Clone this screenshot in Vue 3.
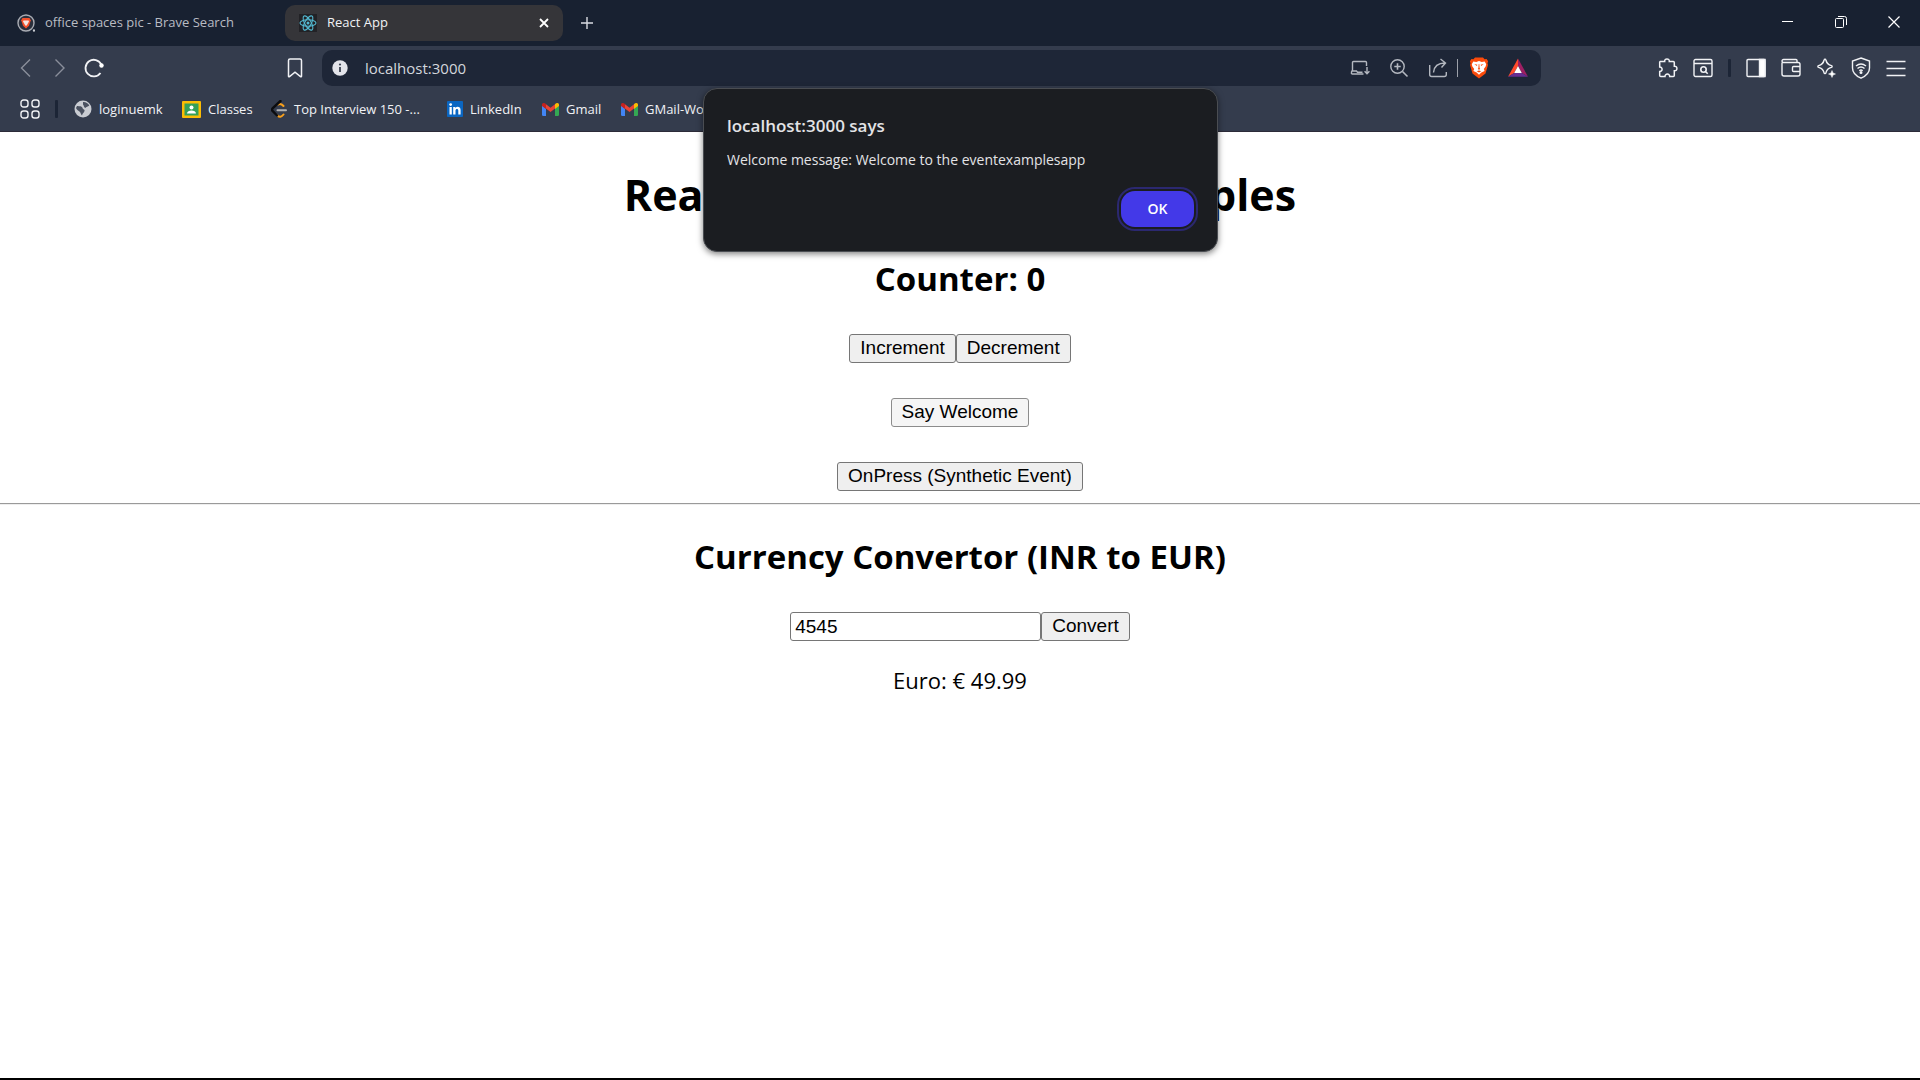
<script setup>
import { ref } from 'vue'

const counter = ref(0)
const rupees = ref('4545')
const euro = ref('49.99')
const address = ref('localhost:3000')

function convert() {
  euro.value = (Number(rupees.value) * 0.011).toFixed(2)
}
</script>

<template>
  <div class="browser">
    <header class="chrome">
      <div class="tabs">
        <div class="tab">
          <svg class="i18" viewBox="0 0 18 18" aria-hidden="true">
            <circle cx="9" cy="9" r="8" fill="#2a2f3c" stroke="#a9acb3" stroke-width="1.4" />
            <path d="M5.500 4h7l1.300 2.300-1.800 5.400L9 14.500l-3-2.800-1.800-5.400z" fill="#f4502a" />
            <path d="M6.500 6.500h5l.5 1-2 3.500-1 1-1-1-2-3.500z" fill="#f3e4e0" />
            <circle cx="17" cy="16.500" r="1.200" fill="#c9ccd2" />
          </svg>
          <span>office spaces pic - Brave Search</span>
        </div>
        <div class="tab active">
          <svg class="i18" viewBox="0 0 18 18" aria-hidden="true">
            <rect width="18" height="18" fill="#222226" />
            <g fill="none" stroke="#53b9d1" stroke-width="1.100">
              <ellipse cx="9" cy="9" rx="8" ry="3.200" />
              <ellipse cx="9" cy="9" rx="8" ry="3.200" transform="rotate(60 9 9)" />
              <ellipse cx="9" cy="9" rx="8" ry="3.200" transform="rotate(120 9 9)" />
            </g>
            <circle cx="9" cy="9" r="1.500" fill="#53b9d1" />
          </svg>
          <span class="grow">React App</span>
          <button class="icon" aria-label="Close tab">
            <svg width="10" height="10" viewBox="0 0 10 10"><path d="M1 1l8 8M9 1L1 9" stroke="#fff" stroke-width="1.800" /></svg>
          </button>
        </div>
        <button class="icon newtab" aria-label="New tab">
          <svg width="14" height="14" viewBox="0 0 14 14"><path d="M7 1v12M1 7h12" stroke="#d9dce2" stroke-width="1.400" /></svg>
        </button>
        <div class="window-buttons">
          <button class="icon" aria-label="Minimize">
            <svg width="12" height="12" viewBox="0 0 12 12"><path d="M0 5.500h11" stroke="#fff" /></svg>
          </button>
          <button class="icon" aria-label="Restore">
            <svg width="12" height="12" viewBox="0 0 12 12" fill="none" stroke="#fff"><rect x=".5" y="2.500" width="8" height="9" rx="1" /><path d="M3 .5h6.500a2 2 0 0 1 2 2V9" /></svg>
          </button>
          <button class="icon" aria-label="Close">
            <svg width="12" height="12" viewBox="0 0 12 12"><path d="M.5.5l11 11M11.500.5l-11 11" stroke="#fff" stroke-width="1.200" /></svg>
          </button>
        </div>
      </div>

      <div class="toolbar">
        <nav class="history">
          <button class="icon dim" aria-label="Back">
            <svg width="20" height="20" viewBox="0 0 20 20"><path d="M14 1.500L5.500 10l8.500 8.500" /></svg>
          </button>
          <button class="icon dim" aria-label="Forward">
            <svg width="20" height="20" viewBox="0 0 20 20"><path d="M5.500 1.500l8.500 8.500-8.500 8.500" /></svg>
          </button>
          <button class="icon" aria-label="Reload">
            <svg width="20" height="20" viewBox="0 0 20 20"><path d="M16.500 15a8.300 8.300 0 1 1 .8-8.500" stroke-width="1.800" /><circle cx="17.500" cy="7.500" r="2.200" fill="#fff" stroke="none" /></svg>
          </button>
        </nav>
        <button class="icon" aria-label="Bookmark this page">
          <svg width="16" height="20" viewBox="0 0 16 20"><path d="M1.500 2.500a1.500 1.500 0 0 1 1.500-1.500h10a1.500 1.500 0 0 1 1.500 1.500V18.200c0 .6-.5.8-1 .4L8 14.200l-5.500 4.400c-.5.4-1 .2-1-.4z" stroke-width="1.500" /></svg>
        </button>
        <div class="address">
          <svg class="i16" viewBox="0 0 16 16" aria-hidden="true"><circle cx="8" cy="8" r="7.700" fill="#e3e4ea" stroke="none" /><path d="M8 7v5" stroke="#3a4150" stroke-width="1.800" /><circle cx="8" cy="4.500" r="1.100" fill="#3a4150" stroke="none" /></svg>
          <input v-model="address" aria-label="Address" />
          <div class="address-icons">
            <button class="icon soft" aria-label="Install app">
              <svg width="20" height="20" viewBox="0 0 20 20"><path d="M2.500 13V4.500a1 1 0 0 1 1-1h12a1 1 0 0 1 1 1V8M1.500 16h12M2.500 12l-1 2v2M2.500 13h4l1 1.200h5M17 9v6.500M14.600 13.200L17 15.700l2.400-2.500" /></svg>
            </button>
            <button class="icon soft" aria-label="Zoom">
              <svg width="20" height="20" viewBox="0 0 20 20"><circle cx="8.500" cy="8.500" r="6.700" /><path d="M13.500 13.500l5 5M8.500 5.300v6.400M5.300 8.500h6.400" stroke-width="1.600" /></svg>
            </button>
            <button class="icon soft" aria-label="Share">
              <svg width="20" height="20" viewBox="0 0 20 20"><path d="M1.700 7v9.500a2 2 0 0 0 2 2h12.600a2 2 0 0 0 2-2V14M5.500 14.500c.5-5.500 4-9.500 11.500-9.500M12.500 1l5 4-4 4.500" /></svg>
            </button>
            <span class="rule"></span>
            <button class="icon" aria-label="Brave Shields">
              <svg width="20" height="22" viewBox="0 0 20 22" stroke="none">
                <path d="M6 .5h8l1.600 1.700 2-.2 1.500 2.300-.6 2 .5 1.700-2.500 8.500L10 21.500 3.500 16.500 1 8l.5-1.700-.6-2L2.400 2l2 .2z" fill="#fb4b0b" />
                <path d="M4.300 4.500l3 .4L10 4l2.700.9 3-.4 1.500 2.700-.6 2.200-1.800 2.500.8 2-3.200 1.600L10 17.700 7.600 15.500l-3.200-1.600.8-2-1.800-2.500-.6-2.200z" fill="#fff" />
                <path d="M5.300 7l3.100.7-.6 1.400zM14.700 7l-3.100.7.6 1.400zM9.700 7h.6l.3 4 .6 1-1.200.8-1.200-.8.6-1zM7.700 14.200L10 13.500l2.300.7L10 15.500z" fill="#fb4b0b" />
              </svg>
            </button>
            <button class="icon" aria-label="Brave Rewards">
              <svg width="20" height="20" viewBox="0 0 20 20" stroke="none">
                <path d="M10 .5L0 18.700 6.200 15 10 8z" fill="#ff4a2b" />
                <path d="M10 .5l10 18.200L13.800 15 10 8z" fill="#9e1f63" />
                <path d="M0 18.700h20L13.800 15H6.200z" fill="#662d91" />
                <path d="M10 8l-3.800 7h7.600z" fill="#fff" />
              </svg>
            </button>
          </div>
        </div>
        <div class="tools">
          <button class="icon" aria-label="Extensions">
            <svg width="20" height="20" viewBox="0 0 20 20"><path d="M2.200 3.500h4.500c-.5-3.500 5-3.500 4.600 0h4a1 1 0 0 1 1 1v3.700c3.500-.3 3.500 5 0 4.600v4.700a1 1 0 0 1-1 1h-3.600c.2-3.200-4.900-3.200-4.700 0H2.700a1 1 0 0 1-1-1v-4c3.200.2 3.200-4.700 0-4.500V4z" stroke-width="1.500" /></svg>
          </button>
          <button class="icon" aria-label="Search tabs">
            <svg width="20" height="20" viewBox="0 0 20 20"><rect x="1" y="1.500" width="18" height="17" rx="1.500" /><path d="M1 5.500h18M12.700 13.700l2 2" stroke-width="1.600" /><circle cx="10.500" cy="11.500" r="2.700" stroke-width="1.600" /></svg>
          </button>
          <span class="divider"></span>
          <button class="icon" aria-label="Sidebar">
            <svg width="20" height="20" viewBox="0 0 20 20"><rect x="1" y="1.500" width="18" height="17" rx="1" /><path d="M13.500 1.500H19v17h-5.500z" fill="#fff" /></svg>
          </button>
          <button class="icon" aria-label="Wallet">
            <svg width="20" height="20" viewBox="0 0 20 20"><path d="M1 4.500V16a2 2 0 0 0 2 2h14a2 2 0 0 0 2-2V6.500a2 2 0 0 0-2-2H2.500a1.500 1.500 0 0 1 0-3H15a1 1 0 0 1 1 1v2M19 8.500h-6.500a1 1 0 0 0-1 1v3a1 1 0 0 0 1 1H19" /></svg>
          </button>
          <button class="icon" aria-label="Leo AI">
            <svg width="20" height="20" viewBox="0 0 20 20"><path d="M9 1.200c.5 0 .8.3.9.8.8 3.500 2 4.800 5.500 5.600 1 .3 1 1.500 0 1.800-3.500.8-4.700 2-5.500 5.500-.2 1-1.600 1-1.800 0-.8-3.500-2-4.700-5.500-5.500-1-.3-1-1.500 0-1.800C6.100 6.800 7.300 5.500 8.100 2c.1-.5.400-.8.900-.8z" /><path d="M16 12.500l1 2.500 2.500 1-2.500 1-1 2.500-1-2.500-2.500-1 2.500-1z" fill="#fff" stroke-width=".5" /></svg>
          </button>
          <button class="icon" aria-label="VPN">
            <svg width="20" height="22" viewBox="0 0 20 22"><path d="M10 1l8.500 3v7c0 4.500-3.500 8-8.500 10.200C5 19 1.500 15.500 1.500 11V4z" /><path d="M5 9c3-2.500 7-2.500 10 0M6.500 11.500c2-1.700 5-1.700 7 0M8.300 13.700c1-.8 2.400-.8 3.400 0" /><circle cx="10" cy="15.500" r=".8" fill="#fff" /></svg>
          </button>
          <button class="icon" aria-label="Menu">
            <svg width="20" height="20" viewBox="0 0 20 20"><path d="M.5 3.500h19M.5 10.500h19M.5 17.500h19" /></svg>
          </button>
        </div>
      </div>

      <nav class="bookmarks">
        <button class="icon" aria-label="All bookmarks">
          <svg width="20" height="20" viewBox="0 0 20 20"><rect x="1" y="1" width="7" height="7" rx="2.500" /><rect x="12" y="1" width="7" height="7" rx="2.500" /><rect x="1" y="12" width="7" height="7" rx="2.500" /><rect x="12" y="12" width="7" height="7" rx="2.500" /></svg>
        </button>
        <span class="divider"></span>
        <a href="#" class="bm-login">
          <svg class="i18" viewBox="0 0 18 18"><circle cx="9" cy="9" r="8.500" fill="#c9ccd2" /><path d="M3 6c2.500.3 5 0 5.500 2s2.500 1 2 3-2 2-2.500 4.500c-1.500-1-1-3-2.500-4S2.500 9.500 2 8zM9 2c2.500-.3 5 1 6.300 3.500-1.500 1.500-3 1-4 2.500C9.500 7 10 5.500 9 4.500z" fill="#4a5160" /></svg>
          loginuemk
        </a>
        <a href="#" class="bm-classes">
          <svg width="19" height="17" viewBox="0 0 19 17"><rect width="19" height="17" rx="1" fill="#fbbc04" /><rect x="2.500" y="2.500" width="14" height="12" fill="#34a059" /><circle cx="9.500" cy="6.500" r="2" fill="#fff" /><path d="M5 12.500c0-4 9-4 9 0z" fill="#fff" /></svg>
          Classes
        </a>
        <a href="#" class="bm-top">
          <svg width="16" height="18" viewBox="0 0 16 18" fill="none" stroke-width="2" stroke-linecap="round"><path d="M7 4.500c2-1 3.500-.7 5.500 1.500M6.500 15.500c2 2 4 1.500 6-1" stroke="#f9a01b" /><path d="M9.500 1L1.800 8.200c-1 1-1 2 0 3L6 15.500" stroke="#0b0c0f" stroke-width="2.400" /><path d="M6.500 10.200h8.500" stroke="#b3b3b3" /></svg>
          Top Interview 150 -...
        </a>
        <a href="#" class="bm-linkedin">
          <svg class="i16" viewBox="0 0 16 16"><rect width="16" height="16" rx="1" fill="#0a66c2" /><path d="M2.500 6h2.300v7.500H2.500zM6.200 6h2.200v1c1.400-2 5.200-1.600 5.200 2v4.500h-2.300V9.500c0-2.300-2.800-2-2.800 0v4H6.200z" fill="#fff" /><circle cx="3.650" cy="3.600" r="1.400" fill="#fff" /></svg>
          LinkedIn
        </a>
        <a v-for="name in ['Gmail', 'GMail-Work']" :key="name" href="#" class="bm-mail">
          <svg width="17" height="13" viewBox="0 0 17 13"><path d="M0 2.500L4 5.500V13H1.200A1.200 1.200 0 0 1 0 11.800z" fill="#4285f4" /><path d="M17 2.500l-4 3V13h2.800a1.200 1.200 0 0 0 1.200-1.200z" fill="#34a853" /><path d="M4 1.200L8.500 4.700 13 1.200v4.300L8.500 9 4 5.500z" fill="#ea4335" /><path d="M0 3V1.800C0 0 2-.6 3.300.6L4 1.200v4.800z" fill="#c5221f" /><path d="M17 3V1.800C17 0 15-.6 13.700.6l-.7.6v4.800z" fill="#fbbc04" /></svg>
          {{ name }}
        </a>
      </nav>
    </header>

    <main class="page">
      <h1>React Event Handling Examples</h1>
      <h2>Counter: {{ counter }}</h2>
      <div class="actions">
        <div class="row">
          <button @click="counter++">Increment</button><button @click="counter--">Decrement</button>
        </div>
        <button class="hovered">Say Welcome</button>
        <button>OnPress (Synthetic Event)</button>
      </div>
      <hr />
      <h2>Currency Convertor (INR to EUR)</h2>
      <form class="row" @submit.prevent="convert">
        <input v-model="rupees" aria-label="Amount in INR" /><button>Convert</button>
      </form>
      <p>Euro: € {{ euro }}</p>
    </main>

    <div class="dialog" role="dialog" aria-labelledby="dialog-title">
      <div id="dialog-title" class="dialog-title">localhost:3000 says</div>
      <div class="dialog-text">Welcome message: Welcome to the eventexamplesapp</div>
      <button class="ok">OK</button>
    </div>
  </div>
</template>

<style>
body {
  margin: 0;
}
</style>

<style scoped>
* {
  box-sizing: border-box;
}
.browser {
  position: relative;
  display: flex;
  flex-direction: column;
  min-height: 100vh;
  overflow: hidden;
  background: #fff;
  border-bottom: 2px solid #000;
  font-family: "Segoe UI", "Open Sans", "Noto Sans", sans-serif;
}
.chrome {
  background: #343c4d;
  border-bottom: 1px solid #2c2b38;
  color: #f1f2f5;
  font-size: 13px;
  white-space: nowrap;
}
svg {
  display: block;
  flex: none;
}
.i18 {
  width: 18px;
  height: 18px;
}
.i16 {
  width: 16px;
  height: 16px;
}
.icon {
  display: flex;
  flex: none;
  padding: 0;
  border: 0;
  background: none;
}
.tabs {
  display: flex;
  align-items: center;
  height: 46px;
  background: #182131;
}
.tab {
  display: flex;
  align-items: center;
  gap: 10px;
  width: 285px;
  height: 36px;
  padding: 0 14px 0 17px;
  color: #b9bcc3;
}
.tab.active {
  width: 278px;
  padding-left: 14px;
  border-radius: 10px;
  background: #353539;
  color: #f1f2f5;
}
.tab span {
  padding-bottom: 2px;
}
.grow {
  flex: 1;
}
.newtab {
  margin-left: 17px;
}
.window-buttons {
  display: flex;
  gap: 41px;
  margin-left: auto;
  padding: 0 20px 2px 0;
}
.toolbar {
  display: flex;
  align-items: center;
  height: 44px;
  padding: 0 14px 0 16px;
}
.toolbar svg,
.bookmarks .icon svg {
  fill: none;
  stroke: #f1f2f5;
  stroke-width: 1.4;
}
.toolbar svg[stroke="none"] {
  stroke: none;
}
.toolbar .dim svg {
  stroke: #8a8f9b;
}
.toolbar .soft svg {
  stroke: #b4b8c0;
}
.history {
  display: flex;
  gap: 14px;
  width: 271px;
}
.address {
  display: flex;
  flex: 1;
  align-items: center;
  height: 36px;
  margin-left: 19px;
  padding: 0 13px 0 10px;
  border-radius: 10px;
  background: #1e2637;
}
.address input {
  flex: 1;
  min-width: 0;
  margin-left: 17px;
  padding: 0;
  border: 0;
  outline: 0;
  background: none;
  color: #d3d6dc;
  font: 15px/20px "Segoe UI", "Open Sans", "Noto Sans", sans-serif;
}
.address-icons {
  display: flex;
  align-items: center;
  gap: 19px;
}
.rule {
  width: 1px;
  height: 18px;
  margin: 0 -8px 0 -10px;
  background: #9da1aa;
}
.tools {
  display: flex;
  align-items: center;
  gap: 15px;
  margin-left: 117px;
}
.divider {
  width: 3px;
  height: 18px;
  border-radius: 1px;
  background: #1c2536;
}
.bookmarks {
  display: flex;
  align-items: center;
  height: 41px;
  padding: 0 20px 3px;
}
.bookmarks .divider {
  margin: 0 16px 0 15px;
}
.bookmarks a {
  display: flex;
  flex: none;
  align-items: center;
  gap: 7px;
  color: #f1f2f5;
  text-decoration: none;
}
.bm-login {
  width: 108px;
}
.bm-classes {
  width: 89px;
}
.bm-top {
  width: 176px;
}
.bm-linkedin {
  width: 95px;
}
.bm-mail {
  width: 79px;
}
.page {
  display: flex;
  flex-direction: column;
  align-items: center;
  padding-top: 31px;
  color: #000;
}
h1 {
  margin: 0;
  font-size: 43px;
  line-height: 64px;
}
h2 {
  margin: 28px 0 31px;
  font-size: 33px;
  line-height: 48px;
}
.row {
  display: flex;
}
.actions {
  display: flex;
  flex-direction: column;
  align-items: center;
  gap: 35px;
}
.page button,
.page input {
  height: 29px;
  border: 1px solid #767676;
  border-radius: 3px;
  color: #000;
  font: 19px/24px Arial, "Liberation Sans", sans-serif;
}
.page button {
  padding: 0 10px 1px;
  background: #efefef;
}
.page .hovered {
  border-color: #8c8c8c;
  background: #f5f5f5;
}
.page input {
  width: 251px;
  padding: 0 4px;
  background: #fff;
}
hr {
  width: 100%;
  height: 2px;
  margin: 12px 0 0;
  border: 0;
  border-top: 1px solid #9a9a9a;
  border-bottom: 1px solid #eee;
}
p {
  margin: 23px 0 0;
  font-size: 22px;
  line-height: 32px;
}
.dialog {
  position: absolute;
  top: 88px;
  left: 50%;
  display: flex;
  flex-direction: column;
  width: 515px;
  height: 164px;
  margin-left: -257px;
  padding: 24px 23px;
  border: 1px solid #4a4d52;
  border-radius: 14px;
  background: #1b1d21;
  box-shadow: 0 2px 6px rgba(0, 0, 0, 0.5);
  color: #e3e3e6;
}
.dialog-title {
  font-size: 17px;
  font-weight: 600;
  line-height: 26px;
}
.dialog-text {
  margin-top: 11px;
  font-size: 14px;
  line-height: 20px;
}
.ok {
  align-self: flex-end;
  width: 73px;
  height: 38px;
  margin-top: 21px;
  border: 0;
  border-radius: 14px;
  outline: 2px solid #2b2870;
  outline-offset: 2px;
  background: #4339e8;
  color: #fff;
  font: 600 14px/20px "Segoe UI", "Open Sans", "Noto Sans", sans-serif;
}
</style>
